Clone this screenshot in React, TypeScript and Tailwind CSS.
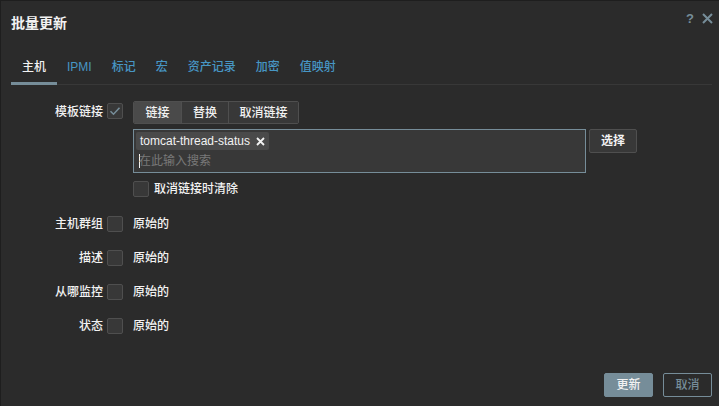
import React from "react";

const font = { fontFamily: '"Liberation Sans", Arial, "Noto Sans CJK SC", sans-serif' };

function Checkbox({ checked = false }: { checked?: boolean }) {
  return (
    <span className="flex h-[16px] w-[16px] shrink-0 items-center justify-center rounded-[2px] border border-[#4f4f4f] bg-[#383838]">
      {checked && (
        <svg width="12" height="10" viewBox="0 0 12 10" fill="none">
          <path d="M1.5 5.2 L4.5 8.2 L10.5 1.8" stroke="#768d99" strokeWidth="1.6" />
        </svg>
      )}
    </span>
  );
}

function Row({ label, children }: { label: string; children: React.ReactNode }) {
  return (
    <div className="flex items-start">
      <div className="w-[102px] pt-[1px] text-right leading-[16px]">{label}</div>
      <div className="ml-[4px] mt-[1px]">
        <Checkbox />
      </div>
      <div className="ml-[10px] leading-[18px]">{children}</div>
    </div>
  );
}

export default function App() {
  const tabs = ["主机", "IPMI", "标记", "宏", "资产记录", "加密", "值映射"];
  return (
    <div
      style={font}
      className="flex h-[406px] w-[719px] flex-col border-l border-t border-[#1e1e1e] bg-[#2b2b2b] text-[12px] font-medium text-[#f2f2f2]"
    >
      <div className="flex items-start justify-between pl-[10px] pr-[6px] pt-[13px]">
        <h1 className="text-[14px] font-bold leading-[18px]">批量更新</h1>
        <div className="-mt-[5px] flex items-center gap-[8px] text-[#768d99]">
          <span className="text-[13px] font-bold">?</span>
          <svg width="11" height="11" viewBox="0 0 11 11">
            <path d="M1 1 L10 10 M10 1 L1 10" stroke="#768d99" strokeWidth="2" />
          </svg>
        </div>
      </div>

      <div className="ml-[10px] mr-[7px] mt-[28px] flex border-b border-[#383838]">
        {tabs.map((t, i) => (
          <div
            key={t}
            className={
              i === 0
                ? "-mb-px border-b-[3px] border-[#768d99] px-[11px] pb-[7px] leading-[14px]"
                : "px-[10px] pb-[10px] leading-[14px] text-[#4796c4]"
            }
          >
            {t}
          </div>
        ))}
      </div>

      <div className="flex flex-1 flex-col pt-[16px]">
        <div className="flex items-start">
          <div className="w-[102px] pt-[3px] text-right leading-[16px]">模板链接</div>
          <div className="ml-[4px] mt-[2px]">
            <Checkbox checked />
          </div>
          <div className="ml-[10px] flex flex-col">
            <div className="flex h-[23px] w-[166px] overflow-hidden rounded-[2px] border border-[#4f4f4f]">
              <span className="flex w-[47px] items-center justify-center bg-[#4a4a4a]">链接</span>
              <span className="flex w-[47px] items-center justify-center border-l border-[#4f4f4f] bg-[#383838]">替换</span>
              <span className="flex flex-1 items-center justify-center border-l border-[#4f4f4f] bg-[#383838]">取消链接</span>
            </div>
            <div className="mt-[5px] flex items-start">
              <div className="h-[44px] w-[453px] border border-[#768d99] bg-[#383838] px-[2px] pt-[2px]">
                <span className="inline-flex h-[18px] items-center gap-[6px] rounded-[2px] bg-[#4a4a4a] px-[4px] text-[12px] leading-[18px]">
                  tomcat-thread-status
                  <svg width="9" height="9" viewBox="0 0 9 9">
                    <path d="M1 1 L8 8 M8 1 L1 8" stroke="#f2f2f2" strokeWidth="1.8" />
                  </svg>
                </span>
                <div className="mt-[2px] flex items-center pl-[3px] font-normal leading-[18px] text-[#787878]">
                  <span className="mr-[-1px] inline-block h-[14px] w-px bg-[#f2f2f2]" />
                  在此输入搜索
                </div>
              </div>
              <button className="ml-[3px] h-[24px] w-[48px] rounded-[2px] border border-[#4f4f4f] bg-[#383838] font-bold">
                选择
              </button>
            </div>
            <div className="mt-[8px] flex items-center gap-[5px]">
              <Checkbox />
              <span className="leading-[16px]">取消链接时清除</span>
            </div>
          </div>
        </div>

        <div className="mt-[18px] flex flex-col gap-[16px]">
          <Row label="主机群组">原始的</Row>
          <Row label="描述">原始的</Row>
          <Row label="从哪监控">原始的</Row>
          <Row label="状态">原始的</Row>
        </div>
      </div>

      <div className="flex justify-end gap-[10px] pb-[9px] pr-[7px]">
        <button className="h-[24px] w-[49px] rounded-[2px] border border-[#768d99] bg-[#768d99] text-[#f2f2f2]">
          更新
        </button>
        <button className="h-[24px] w-[49px] rounded-[2px] border border-[#768d99] bg-transparent text-[#768d99]">
          取消
        </button>
      </div>
    </div>
  );
}
